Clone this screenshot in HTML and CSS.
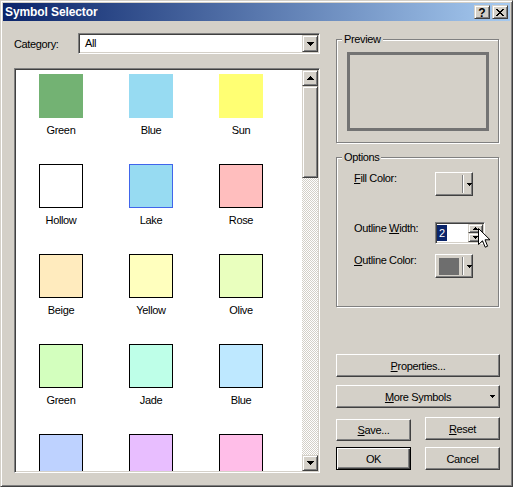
FILE: index.html
```html
<!DOCTYPE html>
<html>
<head>
<meta charset="utf-8">
<title>Symbol Selector</title>
<link rel="stylesheet" href="styles.css">
</head>
<body>
<div class="window">
  <div class="titlebar">
    <span class="title">Symbol Selector</span>
    <div class="caption-btns">
      <span class="cbtn help">?</span>
      <span class="cbtn close"><svg width="8" height="7" viewBox="0 0 8 7" shape-rendering="crispEdges"><path d="M0 0h2v1h-2zM6 0h2v1h-2zM1 1h2v1h-2zM5 1h2v1h-2zM2 2h4v1h-4zM3 3h2v1h-2zM2 4h4v1h-4zM1 5h2v1h-2zM5 5h2v1h-2zM0 6h2v1h-2zM6 6h2v1h-2z" fill="#000"/></svg></span>
    </div>
  </div>
  <div class="main">
    <div class="left">
      <div class="cat-row">
        <span class="cat-label">Category:</span>
        <div class="combo">
          <span class="combo-text">All</span>
          <span class="raised drop-btn"><svg width="7" height="4" viewBox="0 0 7 4" shape-rendering="crispEdges"><path d="M0 0h7v1h-7zM1 1h5v1h-5zM2 2h3v1h-3zM3 3h1v1h-1z" fill="#000"/></svg></span>
        </div>
      </div>
      <div class="listbox">
        <div class="grid">
          <div class="cell"><div class="sw c-green"></div><div class="lbl">Green</div></div>
          <div class="cell"><div class="sw c-blue"></div><div class="lbl">Blue</div></div>
          <div class="cell"><div class="sw c-sun"></div><div class="lbl">Sun</div></div>
          <div class="cell"><div class="sw bd c-hollow"></div><div class="lbl">Hollow</div></div>
          <div class="cell"><div class="sw bd c-lake"></div><div class="lbl">Lake</div></div>
          <div class="cell"><div class="sw bd c-rose"></div><div class="lbl">Rose</div></div>
          <div class="cell"><div class="sw bd c-beige"></div><div class="lbl">Beige</div></div>
          <div class="cell"><div class="sw bd c-yellow"></div><div class="lbl">Yellow</div></div>
          <div class="cell"><div class="sw bd c-olive"></div><div class="lbl">Olive</div></div>
          <div class="cell"><div class="sw bd c-green2"></div><div class="lbl">Green</div></div>
          <div class="cell"><div class="sw bd c-jade"></div><div class="lbl">Jade</div></div>
          <div class="cell"><div class="sw bd c-blue2"></div><div class="lbl">Blue</div></div>
          <div class="cell"><div class="sw bd c-sky"></div></div>
          <div class="cell"><div class="sw bd c-lilac"></div></div>
          <div class="cell"><div class="sw bd c-pink"></div></div>
        </div>
        <div class="vscroll">
          <span class="raised sb-btn"><svg width="7" height="4" viewBox="0 0 7 4" shape-rendering="crispEdges"><path d="M3 0h1v1h-1zM2 1h3v1h-3zM1 2h5v1h-5zM0 3h7v1h-7z" fill="#000"/></svg></span>
          <span class="raised thumb"></span>
          <span class="track"></span>
          <span class="raised sb-btn"><svg width="7" height="4" viewBox="0 0 7 4" shape-rendering="crispEdges"><path d="M0 0h7v1h-7zM1 1h5v1h-5zM2 2h3v1h-3zM3 3h1v1h-1z" fill="#000"/></svg></span>
        </div>
      </div>
    </div>
    <div class="right">
      <div class="group preview-group">
        <span class="legend">Preview</span>
        <div class="preview"></div>
      </div>
      <div class="group options-group">
        <span class="legend">Options</span>
        <div class="opt-row">
          <span class="opt-label"><u>F</u>ill Color:</span>
          <span class="pbtn colorbtn">
            <span class="swatch-area"></span>
            <span class="sep"></span>
            <svg class="small-arrow" width="5" height="3" viewBox="0 0 5 3" shape-rendering="crispEdges"><path d="M0 0h5v1h-5zM1 1h3v1h-3zM2 2h1v1h-1z" fill="#000"/></svg>
          </span>
        </div>
        <div class="opt-row row-width">
          <span class="opt-label">Outline <u>W</u>idth:</span>
          <span class="spin">
            <span class="spin-text"><span class="sel">2</span></span>
            <span class="spin-btns">
              <span class="raised spin-btn"><svg width="5" height="3" viewBox="0 0 5 3" shape-rendering="crispEdges"><path d="M2 0h1v1h-1zM1 1h3v1h-3zM0 2h5v1h-5z" fill="#000"/></svg></span>
              <span class="raised spin-btn"><svg width="5" height="3" viewBox="0 0 5 3" shape-rendering="crispEdges"><path d="M0 0h5v1h-5zM1 1h3v1h-3zM2 2h1v1h-1z" fill="#000"/></svg></span>
            </span>
          </span>
        </div>
        <div class="opt-row row-color">
          <span class="opt-label"><u>O</u>utline Color:</span>
          <span class="pbtn colorbtn">
            <span class="swatch-area gray"></span>
            <span class="sep"></span>
            <svg class="small-arrow" width="5" height="3" viewBox="0 0 5 3" shape-rendering="crispEdges"><path d="M0 0h5v1h-5zM1 1h3v1h-3zM2 2h1v1h-1z" fill="#000"/></svg>
          </span>
        </div>
      </div>
      <span class="pbtn props"><u>P</u>roperties...</span>
      <span class="pbtn more"><u>M</u>ore Symbols<svg class="more-arrow" width="5" height="3" viewBox="0 0 5 3" shape-rendering="crispEdges"><path d="M0 0h5v1h-5zM1 1h3v1h-3zM2 2h1v1h-1z" fill="#000"/></svg></span>
      <div class="btn-row row-save">
        <span class="pbtn half save"><u>S</u>ave...</span>
        <span class="pbtn half"><u>R</u>eset</span>
      </div>
      <div class="btn-row row-ok">
        <span class="pbtn half default">OK</span>
        <span class="pbtn half">Cancel</span>
      </div>
    </div>
  </div>
  <svg class="cursor" width="13" height="21" viewBox="0 0 13 21"><path d="M0.5 0.5 L0.5 16.5 L4.5 12.8 L7.2 19.2 L9.6 18.2 L7 11.8 L12 11.8 Z" fill="#fff" stroke="#000" stroke-width="1" stroke-linejoin="miter"/></svg>
</div>
</body>
</html>
```

FILE: styles.css
```css
* { box-sizing: border-box; }
html, body { margin: 0; padding: 0; }
body {
  background: #D4D0C8;
  font-family: "Liberation Sans", Arial, sans-serif;
  font-size: 11px;
  letter-spacing: -0.35px;
  color: #000;
}
.window {
  position: relative;
  width: 513px;
  height: 487px;
  border: 1px solid;
  border-color: #D4D0C8 #404040 #404040 #D4D0C8;
  box-shadow: inset 1px 1px #fff, inset -1px -1px #808080;
  padding: 2px;
  display: flex;
  flex-direction: column;
  overflow: hidden;
  background: #D4D0C8;
}
.titlebar {
  flex: none;
  height: 18px;
  display: flex;
  align-items: center;
  padding: 0 2px;
  background: linear-gradient(to right, #0A246A, #A6CAF0);
}
.title {
  color: #fff;
  font-weight: bold;
  font-size: 12px;
  letter-spacing: -0.1px;
  line-height: 18px;
}
.caption-btns {
  margin-left: auto;
  display: flex;
  gap: 2px;
}
.cbtn, .raised {
  display: flex;
  align-items: center;
  justify-content: center;
  background: #D4D0C8;
  border: 1px solid;
  border-color: #D4D0C8 #404040 #404040 #D4D0C8;
  box-shadow: inset 1px 1px #fff, inset -1px -1px #808080;
}
.cbtn { width: 16px; height: 14px; }
.help {
  font-weight: bold;
  font-size: 12px;
  line-height: 1;
  letter-spacing: 0;
  padding-top: 1px;
}
.main {
  flex: 1;
  display: flex;
  gap: 16px;
  padding: 12px 0 0 11px;
}
.left {
  width: 306px;
  display: flex;
  flex-direction: column;
}
.cat-row {
  display: flex;
  align-items: center;
  height: 21px;
}
.cat-label { width: 64px; }
.combo, .listbox, .spin {
  background: #fff;
  border: 1px solid;
  border-color: #808080 #fff #fff #808080;
  box-shadow: inset 1px 1px #404040, inset -1px -1px #D4D0C8;
  padding: 1px;
}
.combo {
  width: 242px;
  height: 21px;
  display: flex;
}
.combo-text {
  flex: 1;
  padding-left: 5px;
  line-height: 17px;
}
.drop-btn { width: 16px; height: 17px; }
.listbox {
  margin-top: 14px;
  height: 405px;
  display: flex;
}
.grid {
  flex: 1;
  display: grid;
  grid-template-columns: repeat(3, 90px);
  grid-auto-rows: 90px;
  align-content: start;
  padding-top: 4px;
  overflow: hidden;
}
.cell {
  display: flex;
  flex-direction: column;
  align-items: center;
}
.sw { width: 44px; height: 44px; flex: none; }
.sw.bd { border: 1px solid #000; }
.lbl { margin-top: 6px; line-height: 13px; }
.c-green { background: #73B273; }
.c-blue { background: #97DBF2; }
.c-sun { background: #FFFF73; }
.c-hollow { background: #fff; }
.c-lake { background: #97DBF2; border-color: #4065EB !important; }
.c-rose { background: #FFBEBE; }
.c-beige { background: #FFEBBE; }
.c-yellow { background: #FFFFBE; }
.c-olive { background: #E9FFBE; }
.c-green2 { background: #D3FFBE; }
.c-jade { background: #BEFFE8; }
.c-blue2 { background: #BEE8FF; }
.c-sky { background: #BED2FF; }
.c-lilac { background: #E8BEFF; }
.c-pink { background: #FFBEE8; }
.vscroll {
  width: 16px;
  flex: none;
  display: flex;
  flex-direction: column;
}
.sb-btn { height: 16px; flex: none; }
.thumb { height: 92px; flex: none; }
.track {
  flex: 1;
  background: repeating-conic-gradient(#fff 0 25%, #D4D0C8 0 50%) 0 0 / 2px 2px;
}
.right {
  width: 164px;
  display: flex;
  flex-direction: column;
}
.group {
  position: relative;
  width: 163px;
  border: 1px solid #808080;
  box-shadow: 1px 1px 0 #fff, inset 1px 1px 0 #fff;
}
.legend {
  position: absolute;
  top: -7px;
  left: 5px;
  padding: 0 2px 0 2px;
  background: #D4D0C8;
  line-height: 13px;
}
.preview-group {
  margin-top: 6px;
  height: 104px;
  padding: 12px 0 0 10px;
}
.preview {
  width: 142px;
  height: 79px;
  border: 3px solid #737373;
}
.options-group {
  margin-top: 14px;
  height: 150px;
  padding: 14px 0 0 17px;
  display: flex;
  flex-direction: column;
}
.opt-row {
  display: flex;
  align-items: flex-start;
}
.row-width { margin-top: 26px; }
.row-color { margin-top: 10px; }
.opt-label { width: 81px; line-height: 13px; }
.pbtn {
  position: relative;
  display: flex;
  align-items: center;
  justify-content: center;
  height: 23px;
  background: #D4D0C8;
  border: 1px solid;
  border-color: #fff #404040 #404040 #fff;
  box-shadow: inset -1px -1px #808080;
}
.colorbtn {
  width: 38px;
  height: 24px;
  justify-content: flex-start;
  padding-left: 3px;
}
.swatch-area { width: 20px; height: 17px; }
.swatch-area.gray { background: #6E6E6E; }
.sep {
  width: 2px;
  height: 18px;
  margin-left: 3px;
  border-left: 1px solid #808080;
  border-right: 1px solid #fff;
}
.small-arrow { margin-left: 3px; }
.spin {
  width: 50px;
  height: 22px;
  display: flex;
}
.spin-text { flex: 1; display: flex; align-items: flex-start; }
.sel {
  margin-top: 1px;
  background: #0A246A;
  color: #fff;
  padding: 0 2px;
  line-height: 16px;
  letter-spacing: 0;
}
.spin-btns {
  width: 15px;
  display: flex;
  flex-direction: column;
}
.spin-btn { flex: 1; }
.props { margin-top: 47px; }
.more { margin-top: 8px; }
.more-arrow { position: absolute; right: 4px; top: 9px; }
.btn-row {
  display: flex;
  justify-content: space-between;
  align-items: flex-start;
}
.row-save { margin-top: 9px; }
.row-ok { margin-top: 6px; }
.half { width: 75px; }
.save { margin-top: 2px; height: 22px; }
.default {
  border: 1px solid #000;
  box-shadow: inset 1px 1px #fff, inset -1px -1px #404040, inset -2px -2px #808080;
}
.cursor {
  position: absolute;
  left: 477px;
  top: 227px;
}
```
